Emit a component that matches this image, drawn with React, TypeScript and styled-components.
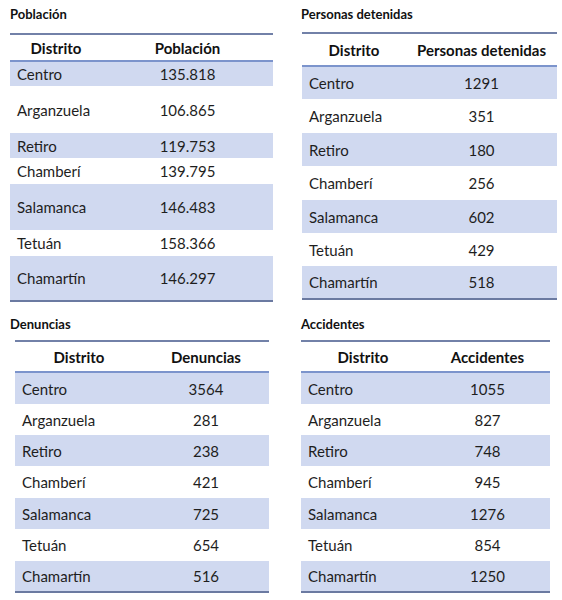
import React from "react";
import styled, { createGlobalStyle } from "styled-components";

const GlobalStyle = createGlobalStyle`
  body {
    margin: 0;
    background: #ffffff;
    font-family: Lato, "Open Sans", sans-serif;
    color: #1c1c1c;
  }
`;

interface TableData {
  title: string;
  column: string;
  rows: [string, string][];
  indent: number;
  titleHeight: number;
  widths: [number, number];
  headHeight: number;
  heights: number[];
}

const districts = ["Centro", "Arganzuela", "Retiro", "Chamberí", "Salamanca", "Tetuán", "Chamartín"];

function zip(values: string[]): [string, string][] {
  return districts.map((d, i) => [d, values[i]]);
}

const tables: TableData[] = [
  {
    title: "Población",
    column: "Población",
    rows: zip(["135.818", "106.865", "119.753", "139.795", "146.483", "158.366", "146.297"]),
    indent: 0,
    titleHeight: 33,
    widths: [92, 171],
    headHeight: 27,
    heights: [25, 47, 25, 26, 46, 26, 45],
  },
  {
    title: "Personas detenidas",
    column: "Personas detenidas",
    rows: zip(["1291", "351", "180", "256", "602", "429", "518"]),
    indent: 1,
    titleHeight: 32,
    widths: [104, 151],
    headHeight: 33,
    heights: [33, 34, 33, 34, 33, 33, 33],
  },
  {
    title: "Denuncias",
    column: "Denuncias",
    rows: zip(["3564", "281", "238", "421", "725", "654", "516"]),
    indent: 5,
    titleHeight: 30,
    widths: [128, 126],
    headHeight: 31,
    heights: [32, 31, 31, 32, 31, 32, 31],
  },
  {
    title: "Accidentes",
    column: "Accidentes",
    rows: zip(["1055", "827", "748", "945", "1276", "854", "1250"]),
    indent: 0,
    titleHeight: 30,
    widths: [124, 125],
    headHeight: 31,
    heights: [32, 31, 31, 32, 31, 32, 31],
  },
];

function DataTable({ data }: { data: TableData }) {
  return (
    <Panel>
      <Title $height={data.titleHeight}>{data.title}</Title>
      <Table $indent={data.indent} $width={data.widths[0] + data.widths[1]}>
        <colgroup>
          <col style={{ width: data.widths[0] }} />
          <col style={{ width: data.widths[1] }} />
        </colgroup>
        <thead>
          <HeadRow $height={data.headHeight}>
            <HeadCell>Distrito</HeadCell>
            <HeadCell>{data.column}</HeadCell>
          </HeadRow>
        </thead>
        <tbody>
          {data.rows.map(([name, value], i) => (
            <Row key={name} $shaded={i % 2 === 0} $height={data.heights[i]}>
              <NameCell>{name}</NameCell>
              <ValueCell>{value}</ValueCell>
            </Row>
          ))}
        </tbody>
      </Table>
    </Panel>
  );
}

export default function App() {
  return (
    <>
      <GlobalStyle />
      <Page>
        {tables.map((t) => (
          <DataTable key={t.title} data={t} />
        ))}
      </Page>
    </>
  );
}

const Page = styled.div`
  width: 562px;
  height: 600px;
  box-sizing: border-box;
  padding-left: 10px;
  display: grid;
  grid-template-columns: 291px 261px;
  grid-template-rows: 310px 290px;
`;

const Panel = styled.section`
  display: flex;
  flex-direction: column;
`;

const Title = styled.div<{ $height: number }>`
  height: ${({ $height }) => $height}px;
  padding-top: 6px;
  box-sizing: border-box;
  font-size: 13px;
  font-weight: 700;
  color: #111;
`;

const Table = styled.table<{ $indent: number; $width: number }>`
  width: ${({ $width }) => $width}px;
  margin-left: ${({ $indent }) => $indent}px;
  table-layout: fixed;
  border-collapse: collapse;
  border-top: 2px solid #7281a8;
  border-bottom: 2px solid #6b7aa1;
  font-size: 15px;
`;

const HeadRow = styled.tr<{ $height: number }>`
  height: ${({ $height }) => $height}px;
  border-bottom: 2px solid #7c94cc;
`;

const HeadCell = styled.th`
  padding: 0;
  text-align: center;
  font-weight: 700;
  color: #111;
  white-space: nowrap;
`;

const Row = styled.tr<{ $shaded: boolean; $height: number }>`
  height: ${({ $height }) => $height}px;
  background: ${({ $shaded }) => ($shaded ? "#d0d9f0" : "#ffffff")};
`;

const NameCell = styled.td`
  padding: 0 0 0 7px;
  color: #1e1e1e;
`;

const ValueCell = styled.td`
  padding: 0;
  text-align: center;
  color: #1e1e1e;
`;
